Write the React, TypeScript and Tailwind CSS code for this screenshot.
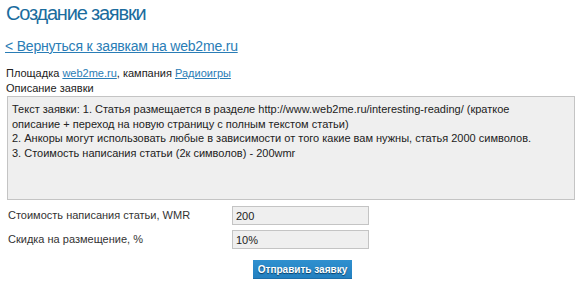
import React from "react";

const requestText =
  "Текст заявки: 1. Статья размещается в разделе http://www.web2me.ru/interesting-reading/ (краткое описание + переход на новую страницу с полным текстом статьи)\n2. Анкоры могут использовать любые в зависимости от того какие вам нужны, статья 2000 символов.\n3. Стоимость написания статьи (2к символов) - 200wmr";

const fields = [
  { label: "Стоимость написания статьи, WMR", value: "200" },
  { label: "Скидка на размещение, %", value: "10%" },
];

export default function App() {
  return (
    <div className="w-[580px] h-[286px] bg-white text-[#222] font-['Liberation_Sans',Arial,sans-serif] overflow-hidden">
      <h1 className="pl-[6px] pt-[1px] text-[20px] leading-[25px] tracking-[-1.2px] text-[#1b6c9e]">
        Создание заявки
      </h1>

      <a
        href="#"
        className="block mt-[12px] pl-[5px] text-[14px] leading-[17px] tracking-[-0.2px] text-[#2a7db6] underline"
      >
        &lt; Вернуться к заявкам на web2me.ru
      </a>

      <div className="mt-[11px] pl-[6px] text-[11px] leading-[15px]">
        Площадка{" "}
        <a href="#" className="text-[#2a7db6] underline">
          web2me.ru
        </a>
        , кампания{" "}
        <a href="#" className="text-[#2a7db6] underline">
          Радиоигры
        </a>
      </div>
      <div className="pl-[6px] text-[11px] leading-[15px]">Описание заявки</div>

      <textarea
        readOnly
        value={requestText}
        className="block mt-[0px] ml-[7px] w-[568px] h-[104px] resize-none overflow-hidden border border-[#c4c4c4] bg-[#efefef] pl-[4px] pr-[16px] pt-[5px] text-[11px] leading-[14.5px] text-[#222] outline-none font-['Liberation_Sans',Arial,sans-serif]"
      />

      <div className="mt-[6px] pl-[8px] grid grid-cols-[224px_137px] gap-y-[5px] items-center text-[11px]">
        {fields.map(f => (
          <React.Fragment key={f.label}>
            <span className="text-[#333]">{f.label}</span>
            <input
              readOnly
              value={f.value}
              className="h-[19px] w-[137px] border border-[#c4c4c4] bg-[#efefef] px-[3px] text-[11px] text-[#222] outline-none font-['Liberation_Sans',Arial,sans-serif]"
            />
          </React.Fragment>
        ))}
      </div>

      <button className="block mt-[11px] ml-[253px] h-[19px] w-[99px] bg-gradient-to-b from-[#2f90cf] to-[#2380c0] border-b border-[#1d6ea8] text-white text-[10px] font-bold [text-shadow:0_1px_1px_#0b3d63] font-['Liberation_Sans',Arial,sans-serif]">
        Отправить заявку
      </button>
    </div>
  );
}
